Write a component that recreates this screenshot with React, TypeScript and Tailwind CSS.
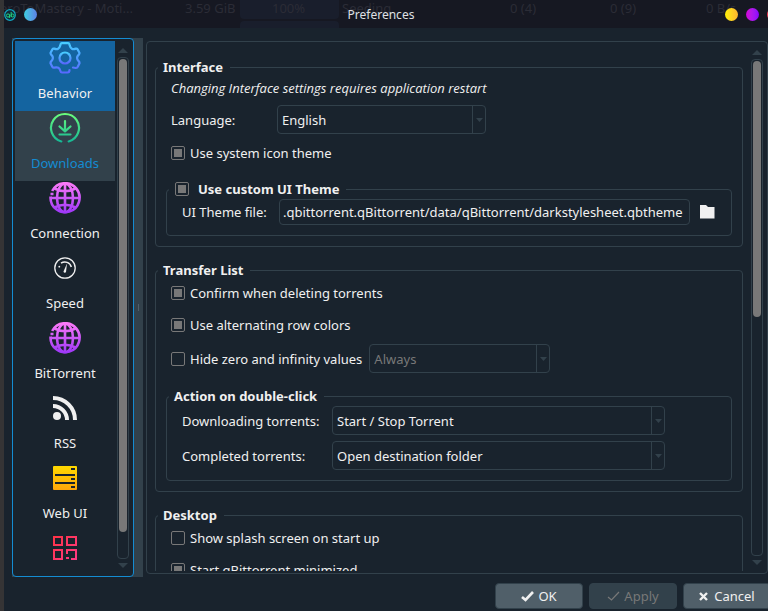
import React, { useState } from "react";

function GearIcon() {
  return (
    <svg width="32" height="32" viewBox="0 0 32 32" fill="none">
      <defs>
        <linearGradient id="gear" x1="0" y1="0" x2="0" y2="1">
          <stop offset="0" stopColor="#48ccff" />
          <stop offset="1" stopColor="#5769ff" />
        </linearGradient>
      </defs>
      <g stroke="url(#gear)" strokeWidth="2.200" strokeLinecap="round" strokeLinejoin="round">
        <path d="M24 25.5 L26.5 26 Q28 26 28.6 25 L30.4 21.6 Q30.8 20.4 29.8 19.4 Q26.4 16 29.8 12.6 Q30.8 11.6 30.3 10.5 L28.6 7.4 Q28 6.3 26.8 6.6 Q22 8.4 20.7 3.4 Q20.3 1.2 19 1.2 H13 Q11.700 1.200 11.300 3.400 Q10 8.400 5.200 6.600 Q4 6.300 3.400 7.400 L1.700 10.500 Q1.200 11.600 2.200 12.600 Q5.600 16 2.200 19.400 Q1.200 20.400 1.600 21.600 L3.400 25 Q4 26 5.500 25.600 Q10.300 24.400 11.300 28.700 Q11.700 30.500 13 30.500 H18.500 Q20.500 30.500 20.500 28" />
        <circle cx="16" cy="16" r="5.500" />
      </g>
    </svg>
  );
}

function DownloadIcon() {
  return (
    <svg width="32" height="32" viewBox="0 0 32 32" fill="none">
      <defs>
        <linearGradient id="down" gradientUnits="userSpaceOnUse" x1="0" y1="1" x2="0" y2="31">
          <stop offset="0" stopColor="#6cff7c" />
          <stop offset="1" stopColor="#12b596" />
        </linearGradient>
      </defs>
      <g stroke="url(#down)" strokeWidth="2.200" strokeLinecap="round" strokeLinejoin="round">
        <path d="M12.300 29.500 A14 14 0 1 1 19.700 29.500" />
        <path d="M16.010 9 L16 19 M10.500 14.500 L16 19.300 L21.500 14.500 M10.500 22.500 L21.500 22.510" />
      </g>
    </svg>
  );
}

function GlobeIcon({ id }: { id: string }) {
  return (
    <svg width="32" height="32" viewBox="0 0 32 32" fill="none">
      <defs>
        <linearGradient id={id} gradientUnits="userSpaceOnUse" x1="0" y1="0" x2="0" y2="32">
          <stop offset="0" stopColor="#ff7cf8" />
          <stop offset="1" stopColor="#9a35f8" />
        </linearGradient>
      </defs>
      <g stroke={`url(#${id})`} strokeWidth="2.600">
        <path d="M3.200 9 A14.500 14.500 0 1 1 1.600 14.500" />
        <ellipse cx="16" cy="16" rx="8" ry="14.200" />
        <path d="M16.010 1 L16 31 M2 16 L31 16.010 M5.500 6.500 Q16 12 26.500 6.500 M5.500 25.500 Q16 20 26.500 25.500" />
        <path d="M1.500 12.010 L4.500 12" />
      </g>
    </svg>
  );
}

function SpeedIcon() {
  return (
    <svg width="32" height="32" viewBox="0 0 32 32" fill="none" stroke="#f0f0f0">
      <circle cx="16" cy="16" r="10.200" strokeWidth="1.300" />
      <path d="M12 11.200 A6.600 6.600 0 0 1 22.300 15" strokeWidth="1.500" />
      <circle cx="10.300" cy="14.700" r="0.900" fill="#f0f0f0" stroke="none" />
      <path d="M18 11.500 L17 20 A1.300 1.300 0 0 1 14.500 19.500 Z" fill="#f0f0f0" stroke="none" />
    </svg>
  );
}

function FeedIcon() {
  return (
    <svg width="32" height="32" viewBox="0 0 32 32" fill="none" stroke="#f0f0f0" strokeWidth="4">
      <circle cx="8" cy="24" r="4" fill="#f0f0f0" stroke="none" />
      <path d="M4 14 A14 14 0 0 1 18 28 M4 6 A22 22 0 0 1 26 28" />
    </svg>
  );
}

function ServerIcon() {
  return (
    <svg width="32" height="32" viewBox="0 0 32 32">
      <defs>
        <linearGradient id="server" x1="0" y1="0" x2="0" y2="1">
          <stop offset="0" stopColor="#ffd900" />
          <stop offset="1" stopColor="#ffa60a" />
        </linearGradient>
      </defs>
      <rect x="4" y="4" width="24" height="24" rx="1" fill="url(#server)" />
      <path d="M6 12h20v2H6z M6 20h20v2H6z M22 6h4v2h-4z M22 16h4v2h-4z M22 24h4v2h-4z" fill="#19232d" />
    </svg>
  );
}

function GridIcon() {
  return (
    <svg width="32" height="32" viewBox="0 0 32 32" fill="none">
      <defs>
        <linearGradient id="grid" gradientUnits="userSpaceOnUse" x1="4" y1="4" x2="28" y2="28">
          <stop offset="0" stopColor="#ff3344" />
          <stop offset="1" stopColor="#ff3a86" />
        </linearGradient>
      </defs>
      <path
        d="M5 5h8v8H5z M18 5h9v8h-9z M5 18h8v9H5z M18 22V18h9v9h-5 M17 26h3"
        stroke="url(#grid)"
        strokeWidth="2"
      />
    </svg>
  );
}

const sections = [
  { name: "Behavior", icon: <GearIcon />, look: "bg-[#1464a0] text-[#f0f0f0]" },
  { name: "Downloads", icon: <DownloadIcon />, look: "bg-[#32414b] text-[#148cd2]" },
  { name: "Connection", icon: <GlobeIcon id="globe-a" />, look: "text-[#f0f0f0]" },
  { name: "Speed", icon: <SpeedIcon />, look: "text-[#f0f0f0]" },
  { name: "BitTorrent", icon: <GlobeIcon id="globe-b" />, look: "text-[#f0f0f0]" },
  { name: "RSS", icon: <FeedIcon />, look: "text-[#f0f0f0]" },
  { name: "Web UI", icon: <ServerIcon />, look: "text-[#f0f0f0]" },
  { name: "Advanced", icon: <GridIcon />, look: "text-[#f0f0f0]" },
];

function Scrollbar({ thumb }: { thumb: string }) {
  return (
    <div className="flex w-3 shrink-0 flex-col items-center" aria-hidden="true">
      <svg width="10" height="5" viewBox="0 0 10 5" className="shrink-0">
        <path d="M0 5 L5 0 L10 5z" fill="#32414b" />
      </svg>
      <div className="my-1 min-h-0 w-full flex-1 rounded border border-[#32414b] p-px">
        <div className={`w-full rounded bg-[#787878] ${thumb}`} />
      </div>
      <svg width="10" height="5" viewBox="0 0 10 5" className="shrink-0">
        <path d="M0 0 L5 5 L10 0z" fill="#32414b" />
      </svg>
    </div>
  );
}

function Group({ legend, children }: { legend: React.ReactNode; children: React.ReactNode }) {
  return (
    <fieldset className="min-w-0 rounded border border-[#32414b]">
      <legend className="ml-0.5 flex h-[18px] items-center pr-[7px] pl-[5px] font-bold">{legend}</legend>
      {children}
    </fieldset>
  );
}

function Box({ on = false, id }: { on?: boolean; id: string }) {
  return (
    <input
      id={id}
      type="checkbox"
      defaultChecked={on}
      className="size-3.5 shrink-0 appearance-none rounded-xs border border-[#787878] bg-clip-content p-0.5 checked:bg-[#787878]"
    />
  );
}

function Check({ id, on, children }: { id: string; on?: boolean; children: React.ReactNode }) {
  return (
    <div className="flex h-[18px] items-center gap-[5px]">
      <Box id={id} on={on} />
      <label htmlFor={id}>{children}</label>
    </div>
  );
}

function Select({ id, value, width, disabled }: { id: string; value: string; width: string; disabled?: boolean }) {
  return (
    <div className={`flex h-[29px] rounded border border-[#32414b] ${width}`}>
      <select
        id={id}
        disabled={disabled}
        aria-label={value}
        className="min-w-0 flex-1 appearance-none bg-transparent pl-1 opacity-100 outline-none disabled:text-[#787878]"
      >
        <option>{value}</option>
      </select>
      <div className="flex w-[13px] items-center justify-center border-l border-[#32414b]">
        <svg width="7" height="4" viewBox="0 0 7 4">
          <path d="M0 0h7L3.500 4z" fill="#32414b" />
        </svg>
      </div>
    </div>
  );
}

const shadowText = "absolute top-0 leading-4 whitespace-nowrap";

function TitleBar() {
  return (
    <header className="relative flex h-7 shrink-0 items-center overflow-hidden bg-[#161822]">
      <div className="absolute inset-0 text-[#2b2c36]" aria-hidden="true">
        <div className="absolute top-0 left-[236px] h-[19px] w-[99px] rounded-b bg-[#191e2c]" />
        <div className="absolute top-[21px] left-[236px] h-[7px] w-[99px] rounded-t bg-[#191e2c]" />
        <span className={`${shadowText} left-[-4px]`}>eroToMastery - Moti...</span>
        <span className={`${shadowText} left-[181px]`}>3.59 GiB</span>
        <span className={`${shadowText} left-[268px]`}>100%</span>
        <span className={`${shadowText} left-[338px]`}>Seeding</span>
        <span className={`${shadowText} left-[506px]`}>0 (4)</span>
        <span className={`${shadowText} left-[606px]`}>0 (9)</span>
        <span className={`${shadowText} left-[702px]`}>0 B/s</span>
      </div>
      <div className="relative flex w-full items-center pt-px">
        <div className="flex items-center gap-2">
          <svg width="12" height="12" viewBox="0 0 12 12" fill="none">
            <circle cx="6" cy="6" r="5.300" fill="#102a38" stroke="#11a8c4" strokeWidth="1.200" />
            <circle cx="4" cy="6.500" r="1.600" stroke="#21d07c" />
            <path d="M5.600 5.500V9 M7.200 3v5" stroke="#21d07c" />
            <circle cx="8.500" cy="6.500" r="1.500" stroke="#21d07c" />
          </svg>
          <button aria-label="Keep above" className="size-[13px] rounded-full bg-linear-to-r from-[#3ccde0] to-[#5b80e6]" />
        </div>
        <h1 className="flex-1 text-center text-[12px] text-[#dfe0e4]">Preferences</h1>
        <div className="-mr-3 flex items-center gap-2">
          <button aria-label="Minimize" className="size-[13px] rounded-full bg-linear-to-r from-[#fff000] to-[#ffb52e]" />
          <button aria-label="Maximize" className="size-[13px] rounded-full bg-linear-to-r from-[#d400d8] to-[#8a00ff]" />
          <button aria-label="Close" className="size-[13px] rounded-full bg-linear-to-r from-[#e8344e] to-[#ff4a3a]" />
        </div>
      </div>
    </header>
  );
}

const actionButton = "flex h-[26px] w-[88px] items-center justify-center rounded border border-[#32414b]";

export default function App() {
  const [file, setFile] = useState(".qbittorrent.qBittorrent/data/qBittorrent/darkstylesheet.qbtheme");
  return (
    <div className="flex h-screen flex-col overflow-hidden border-l-4 border-[#353435] bg-[#19232d] font-['Noto_Sans',sans-serif] text-[13px] leading-[18px] text-[#f0f0f0]">
      <TitleBar />

      <main className="flex min-h-0 flex-1 gap-[3px] pt-2.5 pl-2">
        <div className="flex shrink-0 bg-[#32414b]">
          <nav className="flex rounded border border-[#148cd2] bg-[#19232d] py-0.5 pr-1 pl-0.5">
            <ul className="mb-1.5 w-[100px] overflow-hidden">
              {sections.map((s) => (
                <li key={s.name}>
                  <button className={`flex h-[70px] w-full flex-col items-center gap-2.5 pt-px ${s.look}`}>
                    {s.icon}
                    <span>{s.name}</span>
                  </button>
                </li>
              ))}
            </ul>
            <div className="ml-0.5 flex pt-[7px] pb-1.5">
              <Scrollbar thumb="h-[95%]" />
            </div>
          </nav>
          <div className="flex w-[9px] items-center justify-center">
            <div className="h-[7px] w-px bg-[#505f69]" />
          </div>
        </div>

        <section className="my-[3px] flex min-w-0 flex-1 rounded border border-[#32414b] py-0.5 pr-1">
          <div className="flex min-w-0 flex-1 flex-col gap-3.5 overflow-hidden px-2 pt-3.5">
            <Group legend="Interface">
              <div className="px-2.5 pt-[3px] pb-2.5">
                <p className="px-[5px] font-['Open_Sans','Noto_Sans',sans-serif] italic">
                  Changing Interface settings requires application restart
                </p>
                <div className="mt-2 flex items-center px-[5px]">
                  <label htmlFor="language" className="w-[106px]">Language:</label>
                  <Select id="language" value="English" width="w-[209px]" />
                </div>
                <div className="mt-2.5 mb-[18px] px-[5px]">
                  <Check id="system-icons" on>Use system icon theme</Check>
                </div>
                <Group
                  legend={
                    <span className="flex items-center gap-[9px] pl-px">
                      <Box id="custom-theme" on />
                      <label htmlFor="custom-theme">Use custom UI Theme</label>
                    </span>
                  }
                >
                  <div className="flex items-center pt-px pr-4 pb-2.5 pl-[15px]">
                    <label htmlFor="theme-file" className="w-[97px] shrink-0">UI Theme file:</label>
                    <input
                      id="theme-file"
                      value={file}
                      onChange={(e) => setFile(e.target.value)}
                      className="h-[26px] min-w-0 flex-1 rounded border border-[#32414b] bg-transparent px-[3px] outline-none"
                    />
                    <button aria-label="Browse" className="ml-2.5">
                      <svg width="15" height="14" viewBox="0 0 15 14">
                        <path d="M0 0h6l2 2h6.500v11.500H0z" fill="#f0f0f0" />
                      </svg>
                    </button>
                  </div>
                </Group>
              </div>
            </Group>

            <Group legend="Transfer List">
              <div className="px-2.5 pt-[5px] pb-2.5">
                <div className="flex flex-col gap-3.5 px-[5px]">
                  <Check id="confirm-delete" on>Confirm when deleting torrents</Check>
                  <Check id="alternating" on>Use alternating row colors</Check>
                </div>
                <div className="mt-2.5 mb-3.5 flex items-center gap-[7px] px-[5px]">
                  <Check id="hide-zero">Hide zero and infinity values</Check>
                  <Select id="hide-mode" value="Always" width="w-[181px]" disabled />
                </div>
                <Group legend="Action on double-click">
                  <div className="flex flex-col gap-1.5 pt-px pb-2.5 pl-[15px]">
                    <div className="flex items-center">
                      <label htmlFor="downloading" className="w-[150px]">Downloading torrents:</label>
                      <Select id="downloading" value="Start / Stop Torrent" width="w-[333px]" />
                    </div>
                    <div className="flex items-center">
                      <label htmlFor="completed" className="w-[150px]">Completed torrents:</label>
                      <Select id="completed" value="Open destination folder" width="w-[333px]" />
                    </div>
                  </div>
                </Group>
              </div>
            </Group>

            <Group legend="Desktop">
              <div className="flex flex-col gap-3.5 px-[15px] pt-[5px] pb-5">
                <Check id="splash">Show splash screen on start up</Check>
                <Check id="minimized" on>Start qBittorrent minimized</Check>
              </div>
            </Group>
          </div>
          <div className="flex pt-1.5 pb-1.5">
            <Scrollbar thumb="h-[52%]" />
          </div>
        </section>
      </main>

      <footer className="-mr-[3px] flex shrink-0 justify-end gap-1.5 pt-1.5 pb-0.5">
        <button className={`${actionButton} gap-1 bg-[#505f69]`}>
          <svg width="13" height="11" viewBox="0 0 13 11" fill="none">
            <path d="M1 6 L4.500 9 L12 1" stroke="#f0f0f0" strokeWidth="2.600" />
          </svg>
          OK
        </button>
        <button disabled className={`${actionButton} gap-1 bg-[#32414b] text-[#787878]`}>
          <svg width="13" height="11" viewBox="0 0 13 11" fill="none">
            <path d="M1 6 L4.500 9 L12 1" stroke="#787878" strokeWidth="1.200" />
          </svg>
          Apply
        </button>
        <button className={`${actionButton} gap-1.5 bg-[#505f69]`}>
          <svg width="9" height="9" viewBox="0 0 9 9" fill="none">
            <path d="M1 1 L8 8 M8 1 L1 8" stroke="#f0f0f0" strokeWidth="2.400" />
          </svg>
          Cancel
        </button>
      </footer>
    </div>
  );
}
